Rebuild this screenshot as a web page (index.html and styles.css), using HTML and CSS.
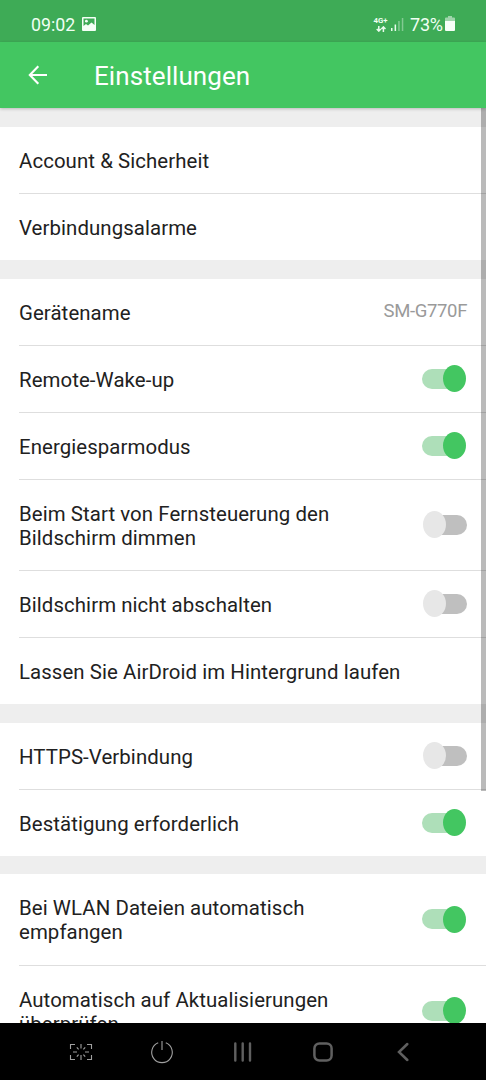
FILE: index.html
```html
<!DOCTYPE html>
<html lang="de">
<head>
<meta charset="utf-8">
<title>Einstellungen</title>
<link rel="stylesheet" href="styles.css">
</head>
<body>
<div class="screen">
  <div class="status">
    <span class="clock">09:02</span>
    <svg class="picture" viewBox="0 0 14 14" width="14" height="14"><path fill="#f4fff6" fill-rule="evenodd" d="M1 0H13Q14 0 14 1V13Q14 14 13 14H1Q0 14 0 13V1Q0 0 1 0ZM1.5 1.5V9L4 7L6 8.5L9.5 5.5L12.5 8V1.5Z"/><circle cx="4.4" cy="4.2" r="1.4" fill="#f4fff6"/></svg>
    <div class="network">
      <span class="gen">4G+</span>
      <svg viewBox="0 0 10 6" width="10" height="6"><path d="M2.8 0V5M.7 3L2.8 5.1L4.9 3M7.4 6V1M5.3 3L7.4.9L9.5 3" fill="none" stroke="#e9fbed" stroke-width="1.5"/></svg>
    </div>
    <svg class="signal" viewBox="0 0 13 14" width="13" height="14"><path fill="#e9fbed" d="M0 11h1.5v3H0zM3.6 7.5h1.5V14H3.6z"/><path fill="#e9fbed" opacity=".4" d="M7.2 4h1.5v10H7.2zM10.8 1h1.5v13h-1.5z"/></svg>
    <span class="percent">73%</span>
    <svg class="battery" viewBox="0 0 10 15" width="10" height="15"><path fill="#fff" opacity=".5" d="M3 0H7V1.5H9Q10 1.5 10 2.5V5H0V2.5Q0 1.5 1 1.5H3Z"/><path fill="#f6fff8" d="M0 5H10V14Q10 15 9 15H1Q0 15 0 14Z"/></svg>
  </div>
  <header class="appbar">
    <svg class="back" viewBox="0 0 20 20" width="20" height="20"><path d="M19 10H2M10.3 1.3L1.8 10L10.3 18.7" fill="none" stroke="#fff" stroke-width="2.1"/></svg>
    <h1 class="title">Einstellungen</h1>
  </header>
  <main class="list">
    <section class="group">
      <div class="row"><span class="label">Account &amp; Sicherheit</span></div>
      <div class="row"><span class="label">Verbindungsalarme</span></div>
    </section>
    <section class="group">
      <div class="row"><span class="label">Gerätename</span><span class="value">SM-G770F</span></div>
      <div class="row"><span class="label">Remote-Wake-up</span><span class="switch on"></span></div>
      <div class="row"><span class="label">Energiesparmodus</span><span class="switch on"></span></div>
      <div class="row tall"><span class="label">Beim Start von Fernsteuerung den<br>Bildschirm dimmen</span><span class="switch"></span></div>
      <div class="row"><span class="label">Bildschirm nicht abschalten</span><span class="switch"></span></div>
      <div class="row"><span class="label">Lassen Sie AirDroid im Hintergrund laufen</span></div>
    </section>
    <section class="group">
      <div class="row"><span class="label">HTTPS-Verbindung</span><span class="switch"></span></div>
      <div class="row"><span class="label">Bestätigung erforderlich</span><span class="switch on"></span></div>
    </section>
    <section class="group last">
      <div class="row tall"><span class="label">Bei WLAN Dateien automatisch<br>empfangen</span><span class="switch on"></span></div>
      <div class="row tall"><span class="label">Automatisch auf Aktualisierungen<br>überprüfen</span><span class="switch on"></span></div>
    </section>
    <div class="scrollbar"></div>
  </main>
  <nav class="navbar">
    <svg class="nav-shot" viewBox="0 0 24 18" width="24" height="18"><path d="M1.5 6V1.5H6M18 1.5H22.5V6M22.5 12V16.5H18M6 16.5H1.5V12M12 1V5.5M12 12V17M4 9H8M16 9H20M7.8 4.3L9.6 6.3M16.2 4.3L14.4 6.3M7.8 13.7L9.6 11.7M16.2 13.7L14.4 11.7" fill="none" stroke="#a0a0a0" stroke-width="1.1"/></svg>
    <svg class="nav-power" viewBox="0 0 24 24" width="24" height="24"><path d="M8.2 2.8A10.3 10.3 0 1 0 15.8 2.8M12 1V10" fill="none" stroke="#a0a0a0" stroke-width="1.1"/></svg>
    <svg class="nav-recent" viewBox="0 0 20 20" width="20" height="20"><path d="M2.3 1.5V18.5M9.7 1.5V18.5M17 1.5V18.5" stroke="#606060" stroke-width="2.4" stroke-linecap="round"/></svg>
    <svg class="nav-home" viewBox="0 0 20 20" width="20" height="20"><rect x="1.4" y="1.4" width="17.2" height="17.2" rx="5" fill="none" stroke="#606060" stroke-width="2.5"/></svg>
    <svg class="nav-back" viewBox="0 0 12 20" width="12" height="20"><path d="M10.3 2L2 10L10.3 18" fill="none" stroke="#606060" stroke-width="2.5" stroke-linecap="round"/></svg>
  </nav>
</div>
</body>
</html>
```
FILE: styles.css
```css
* { box-sizing: border-box; }
body { margin: 0; font-family: Roboto, "Liberation Sans", sans-serif; }
svg { display: block; flex: none; }
.screen { width: 486px; height: 1080px; display: flex; flex-direction: column; overflow: hidden; background: #fff; }
.status { flex: none; height: 42px; display: flex; align-items: center; padding: 6px 31px 0; background: #3eab56; color: #f0fff3; font-size: 18px; line-height: 20px; }
.clock { width: 51px; padding-top: 1px; font-size: 17.8px; }
.network { width: 15px; margin-left: auto; display: flex; flex-direction: column; align-items: center; gap: 1px; }
.gen { font-size: 7.8px; line-height: 8px; font-weight: 700; }
.signal { margin-left: 3px; }
.percent { width: 35px; margin-left: 6px; padding-top: 1px; white-space: nowrap; font-size: 18px; letter-spacing: -.2px; }
.battery { margin-bottom: 1px; }
.appbar { flex: none; height: 66px; display: flex; align-items: center; background: #43c661; color: #fff; padding-left: 28px; position: relative; box-shadow: 0 1px 3px rgba(0,0,0,.22); z-index: 1; }
.title { margin: 2px 0 0 46px; font-size: 26px; line-height: 32px; font-weight: 400; letter-spacing: .08px; }
.list { flex: 1; min-height: 0; overflow: hidden; position: relative; background: #eee; padding-top: 19px; display: flex; flex-direction: column; gap: 19px; }
.group { flex: none; background: #fff; padding-left: 19px; }
.group.last { margin-top: -1px; }
.row { height: 67px; display: flex; align-items: center; justify-content: space-between; padding-right: 19px; color: #212121; font-size: 20.4px; line-height: 24px; }
.row:first-child { height: 66px; }
.row + .row { border-top: 1px solid #dedede; }
.row.tall { height: 91px; }
.label { white-space: nowrap; padding-top: 1px; letter-spacing: .08px; }
.value { color: #9a9a9a; font-size: 18.5px; padding-bottom: 2px; letter-spacing: -.36px; }
.switch { flex: none; width: 44px; height: 27px; margin-bottom: 1px; display: flex; align-items: center; position: relative; }
.switch::before { content: ""; width: 42px; height: 20px; margin-left: 2px; border-radius: 10px; background: #bfbfbf; }
.switch::after { content: ""; position: absolute; left: 0; top: 0; width: 23px; height: 27px; border-radius: 50%; background: #e7e7e7; }
.switch.on { margin-right: 1px; }
.switch.on::before { width: 40px; margin-left: 0; background: #aedfb9; }
.switch.on::after { left: 21px; background: #43c661; }
.scrollbar { position: absolute; right: 0; top: 0; width: 5px; height: 683px; background: rgba(0,0,0,.27); }
.navbar { flex: none; height: 57px; background: #000; display: flex; align-items: center; padding-left: 69px; }
.nav-power { margin-left: 57px; }
.nav-recent { margin-left: 59px; }
.nav-home { margin-left: 60px; }
.nav-back { margin-left: 64px; }
```
